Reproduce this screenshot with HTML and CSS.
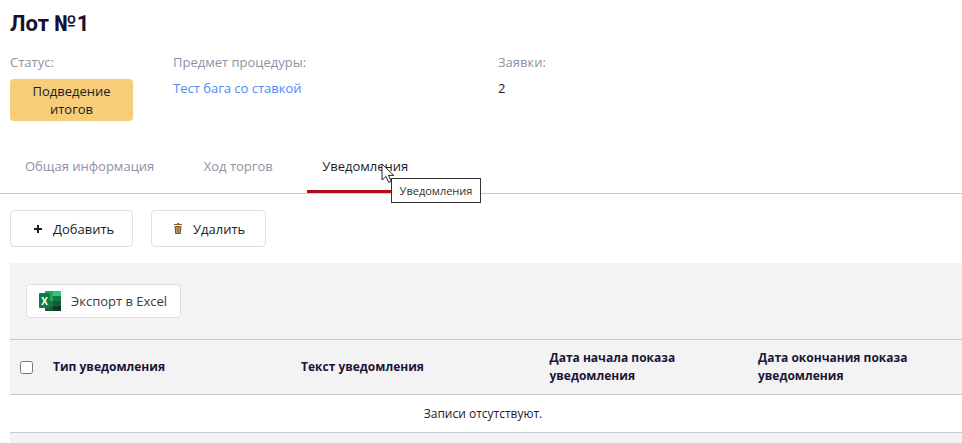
FILE: index.html
```html
<!DOCTYPE html>
<html lang="ru">
<head>
<meta charset="utf-8">
<title>Лот №1</title>
<link rel="stylesheet" href="styles.css">
</head>
<body>
<h1 class="title">Лот №1</h1>
<section class="meta">
  <div class="meta-col status-col">
    <div class="meta-label">Статус:</div>
    <div class="badge">Подведение итогов</div>
  </div>
  <div class="meta-col subject-col">
    <div class="meta-label">Предмет процедуры:</div>
    <a class="meta-value link" href="#">Тест бага со ставкой</a>
  </div>
  <div class="meta-col">
    <div class="meta-label">Заявки:</div>
    <div class="meta-value">2</div>
  </div>
</section>
<nav class="tabs">
  <a class="tab" href="#">Общая информация</a>
  <a class="tab" href="#">Ход торгов</a>
  <a class="tab active" href="#">Уведомления</a>
  <div class="tooltip">Уведомления</div>
  <svg class="cursor" width="14" height="22" viewBox="0 0 14 22"><path d="M1 1v16l4-3.600 2.600 6 2.600-1.100-2.600-5.900h5.200z" fill="#fff" stroke="#222" stroke-width="1"/></svg>
</nav>
<div class="actions">
  <button class="btn btn-add" type="button">
    <svg class="btn-icon" width="10" height="10" viewBox="0 0 10 10"><path d="M5 1v8M1 5h8" stroke="#1c1c28" stroke-width="2"/></svg>
    Добавить
  </button>
  <button class="btn btn-del" type="button">
    <svg class="btn-icon trash" width="8" height="11" viewBox="0 0 8 11"><path d="M3 0h2v1h3v1H0V1h3zM.6 3h6.800l-.5 8H1.100z" fill="#8a5a2b"/><path d="M2.500 4v6M4 4v6M5.500 4v6" stroke="#e9dccb" stroke-width=".5"/></svg>
    Удалить
  </button>
</div>
<section class="panel">
  <div class="panel-top">
    <button class="btn export" type="button">
      <svg width="22" height="20" viewBox="0 0 22 20">
        <rect x="6" y="0" width="16" height="20" rx="1" fill="#21a366"/>
        <rect x="14" y="0" width="8" height="5" fill="#33c481"/>
        <rect x="6" y="5" width="8" height="5" fill="#21a366"/>
        <rect x="14" y="5" width="8" height="5" fill="#107c41"/>
        <rect x="6" y="10" width="8" height="5" fill="#107c41"/>
        <rect x="14" y="10" width="8" height="5" fill="#185c37"/>
        <rect x="6" y="15" width="8" height="5" fill="#185c37"/>
        <rect x="14" y="15" width="8" height="5" fill="#0b3d24"/>
        <rect x="0" y="2" width="11" height="15" rx="1" fill="#107c41"/>
        <text x="5.500" y="13.500" class="xl">X</text>
      </svg>
      Экспорт в Excel
    </button>
  </div>
  <div class="thead">
    <div class="th-check"><span class="checkbox"></span></div>
    <div class="th th-type">Тип уведомления</div>
    <div class="th th-text">Текст уведомления</div>
    <div class="th th-start">Дата начала показа уведомления</div>
    <div class="th th-end">Дата окончания показа уведомления</div>
  </div>
  <div class="empty">Записи отсутствуют.</div>
</section>
</body>
</html>
```
FILE: styles.css
```css
* { box-sizing: border-box; }
html, body { height: 100%; overflow: hidden; }
body {
  margin: 0;
  background: #fff;
  font-family: "Open Sans", "Liberation Sans", sans-serif;
  font-size: 13px;
  color: #1c1c28;
}
.title {
  margin: 0;
  padding: 11px 10px 0;
  font-family: Roboto, "Open Sans", sans-serif;
  font-size: 22px;
  line-height: 26px;
  font-weight: 700;
  color: #15112e;
}
.meta {
  display: flex;
  padding: 16px 10px 0;
  height: 105px;
}
.meta-col { display: flex; flex-direction: column; align-items: flex-start; }
.status-col { width: 163px; }
.subject-col { width: 325px; }
.meta-label { line-height: 18px; color: #8f90a6; }
.meta-value { margin-top: 8px; line-height: 18px; }
.link { color: #4d8cf5; text-decoration: none; }
.badge {
  width: 123px;
  height: 42px;
  margin-top: 8px;
  padding-top: 3px;
  border-radius: 4px;
  background: #f8cd79;
  text-align: center;
  line-height: 18px;
}
.tabs {
  position: relative;
  display: flex;
  height: 52px;
  padding: 10px 0 0 10px;
  border-bottom: 1px solid #c7c9d9;
}
.tab {
  display: block;
  height: 41px;
  padding: 5px 15px 0;
  line-height: 18px;
  color: #8f90a6;
  text-decoration: none;
}
.tab + .tab { margin-left: 19.500px; }
.tab.active { color: #1c1c28; border-bottom: 3px solid #b00f17; }
.tooltip {
  position: absolute;
  left: 391px;
  top: 36px;
  width: 90px;
  height: 25px;
  border: 1px solid #333;
  background: #fff;
  font-size: 11px;
  line-height: 23px;
  text-align: center;
  color: #333;
}
.cursor { position: absolute; left: 381px; top: 21px; }
.actions { display: flex; gap: 18px; padding: 16px 10px 0; }
.btn {
  display: flex;
  align-items: center;
  height: 37px;
  border: 1px solid #dfdfe3;
  border-radius: 4px;
  background: #fff;
  font: inherit;
  color: #1c1c28;
}
.btn-add { width: 123px; padding: 0 0 0 22px; }
.btn-del { width: 115px; padding: 0 0 0 22px; }
.btn-icon { margin-right: 10px; }
.btn-icon.trash { margin-right: 11px; }
.panel {
  margin: 16px 0 0 10px;
  height: 180px;
  background: #f3f3f3;
}
.panel-top { padding: 21px 16px; height: 76px; }
.export { height: 34px; padding: 0 13px 0 12px; gap: 10px; color: #3a3a4a; }
.xl { font: 700 10px "Open Sans", sans-serif; fill: #fff; text-anchor: middle; }
.thead {
  display: grid;
  grid-template-columns: 43px 248px 248.500px 208.500px 1fr;
  height: 56px;
  border-top: 1px solid #c7c9d9;
  border-bottom: 1px solid #c7c9d9;
  align-items: center;
}
.th-check { padding-left: 10px; display: flex; }
.checkbox {
  width: 13px;
  height: 13px;
  border: 1px solid #767676;
  border-radius: 2.500px;
  background: #fff;
}
.th {
  font-weight: 700;
  font-size: 12px;
  line-height: 18px;
  color: #1b1537;
  padding-right: 40px;
}
.empty {
  height: 38px;
  padding-right: 6px;
  background: #fff;
  border-bottom: 1px solid #c7c9d9;
  text-align: center;
  font-size: 12px;
  line-height: 38px;
}
```
